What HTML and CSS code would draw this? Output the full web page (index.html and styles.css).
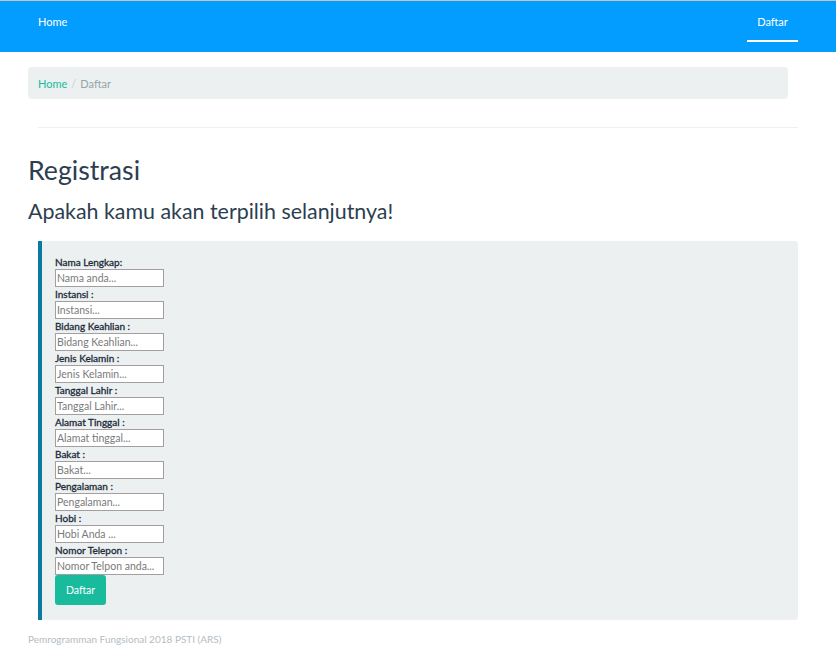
FILE: index.html
```html
<!DOCTYPE html>
<html>
<head>
<meta charset="utf-8">
<link rel="stylesheet" href="styles.css">
</head>
<body>
<nav class="navbar">
  <a class="nav-link" href="#">Home</a>
  <a class="nav-link active" href="#">Daftar</a>
</nav>
<div class="page">
  <ol class="breadcrumb">
    <li><a href="#">Home</a></li>
    <li class="sep">/</li>
    <li class="current">Daftar</li>
  </ol>
  <hr class="rule">
  <h1 class="title">Registrasi</h1>
  <h2 class="subtitle">Apakah kamu akan terpilih selanjutnya!</h2>
  <form class="panel">
    <label class="lbl">Nama Lengkap:</label>
    <input class="field" placeholder="Nama anda...">
    <label class="lbl">Instansi :</label>
    <input class="field" placeholder="Instansi...">
    <label class="lbl">Bidang Keahlian :</label>
    <input class="field" placeholder="Bidang Keahlian...">
    <label class="lbl">Jenis Kelamin :</label>
    <input class="field" placeholder="Jenis Kelamin...">
    <label class="lbl">Tanggal Lahir :</label>
    <input class="field" placeholder="Tanggal Lahir...">
    <label class="lbl">Alamat Tinggal :</label>
    <input class="field" placeholder="Alamat tinggal...">
    <label class="lbl">Bakat :</label>
    <input class="field" placeholder="Bakat...">
    <label class="lbl">Pengalaman :</label>
    <input class="field" placeholder="Pengalaman...">
    <label class="lbl">Hobi :</label>
    <input class="field" placeholder="Hobi Anda ...">
    <label class="lbl">Nomor Telepon :</label>
    <input class="field" placeholder="Nomor Telpon anda...">
    <button class="btn" type="button">Daftar</button>
  </form>
  <p class="footer">Pemrogramman Fungsional 2018 PSTI (ARS)</p>
</div>
</body>
</html>
```
FILE: styles.css
```css
* { box-sizing: border-box; }
html, body { margin: 0; padding: 0; }
body {
  font-family: Lato, "Open Sans", sans-serif;
  color: #2c3e50;
  background: #fff;
  border-top: 1px solid #c4c4c4;
}
.navbar {
  height: 51px;
  background: #039cff;
  display: flex;
  justify-content: space-between;
  padding: 0 38px 0 38px;
}
.nav-link {
  color: #fff;
  text-decoration: none;
  font-size: 11px;
  line-height: 14px;
  padding-top: 14px;
  height: 41px;
}
.nav-link.active {
  width: 51px;
  text-align: center;
  border-bottom: 2px solid #fff;
}
.page {
  padding: 15px 38px 0 28px;
}
.breadcrumb {
  list-style: none;
  margin: 0;
  width: 760px;
  height: 32px;
  background: #ecf0f1;
  border-radius: 4px;
  padding: 0 10px;
  display: flex;
  align-items: center;
  font-size: 11px;
}
.breadcrumb a { color: #18bc9c; text-decoration: none; }
.breadcrumb .sep { color: #ccc; padding: 0 4px; }
.breadcrumb .current { color: #95a5a6; }
.rule {
  margin: 28px 0 0 10px;
  border: 0;
  border-top: 1px solid #ecf0f1;
}
.title {
  margin: 26px 0 0 0;
  font-size: 26.7px;
  font-weight: 400;
  line-height: 32px;
}
.subtitle {
  margin: 12px 0 0 0;
  font-size: 21.4px;
  font-weight: 400;
  line-height: 26px;
}
.panel {
  margin: 17px 0 0 10px;
  background: #ecf0f1;
  border-left: 4px solid #0a7aa1;
  border-radius: 0 3px 3px 0;
  padding: 14px 13px 15px 13px;
  display: flex;
  flex-direction: column;
  align-items: flex-start;
}
.lbl {
  font-size: 10px;
  line-height: 14px;
  font-weight: 400;
  color: #1c2a38;
  -webkit-text-stroke: 0.3px #1c2a38;
}
.field {
  width: 109px;
  height: 18px;
  margin: 0;
  border: 1px solid #a0a0a0;
  padding: 0 1px;
  font-family: Lato, "Open Sans", sans-serif;
  font-size: 10.5px;
  background: #fff;
  border-radius: 0;
}
.field::placeholder { color: #7a7a7a; }
.btn {
  width: 51px;
  height: 30px;
  background: #18bc9c;
  color: #fff;
  border: 0;
  border-radius: 3px;
  font-family: Lato, "Open Sans", sans-serif;
  font-size: 10.5px;
  padding: 0;
}
.footer {
  margin: 13px 0 0 0;
  font-size: 10px;
  line-height: 12px;
  color: #b4bcc2;
}
```
